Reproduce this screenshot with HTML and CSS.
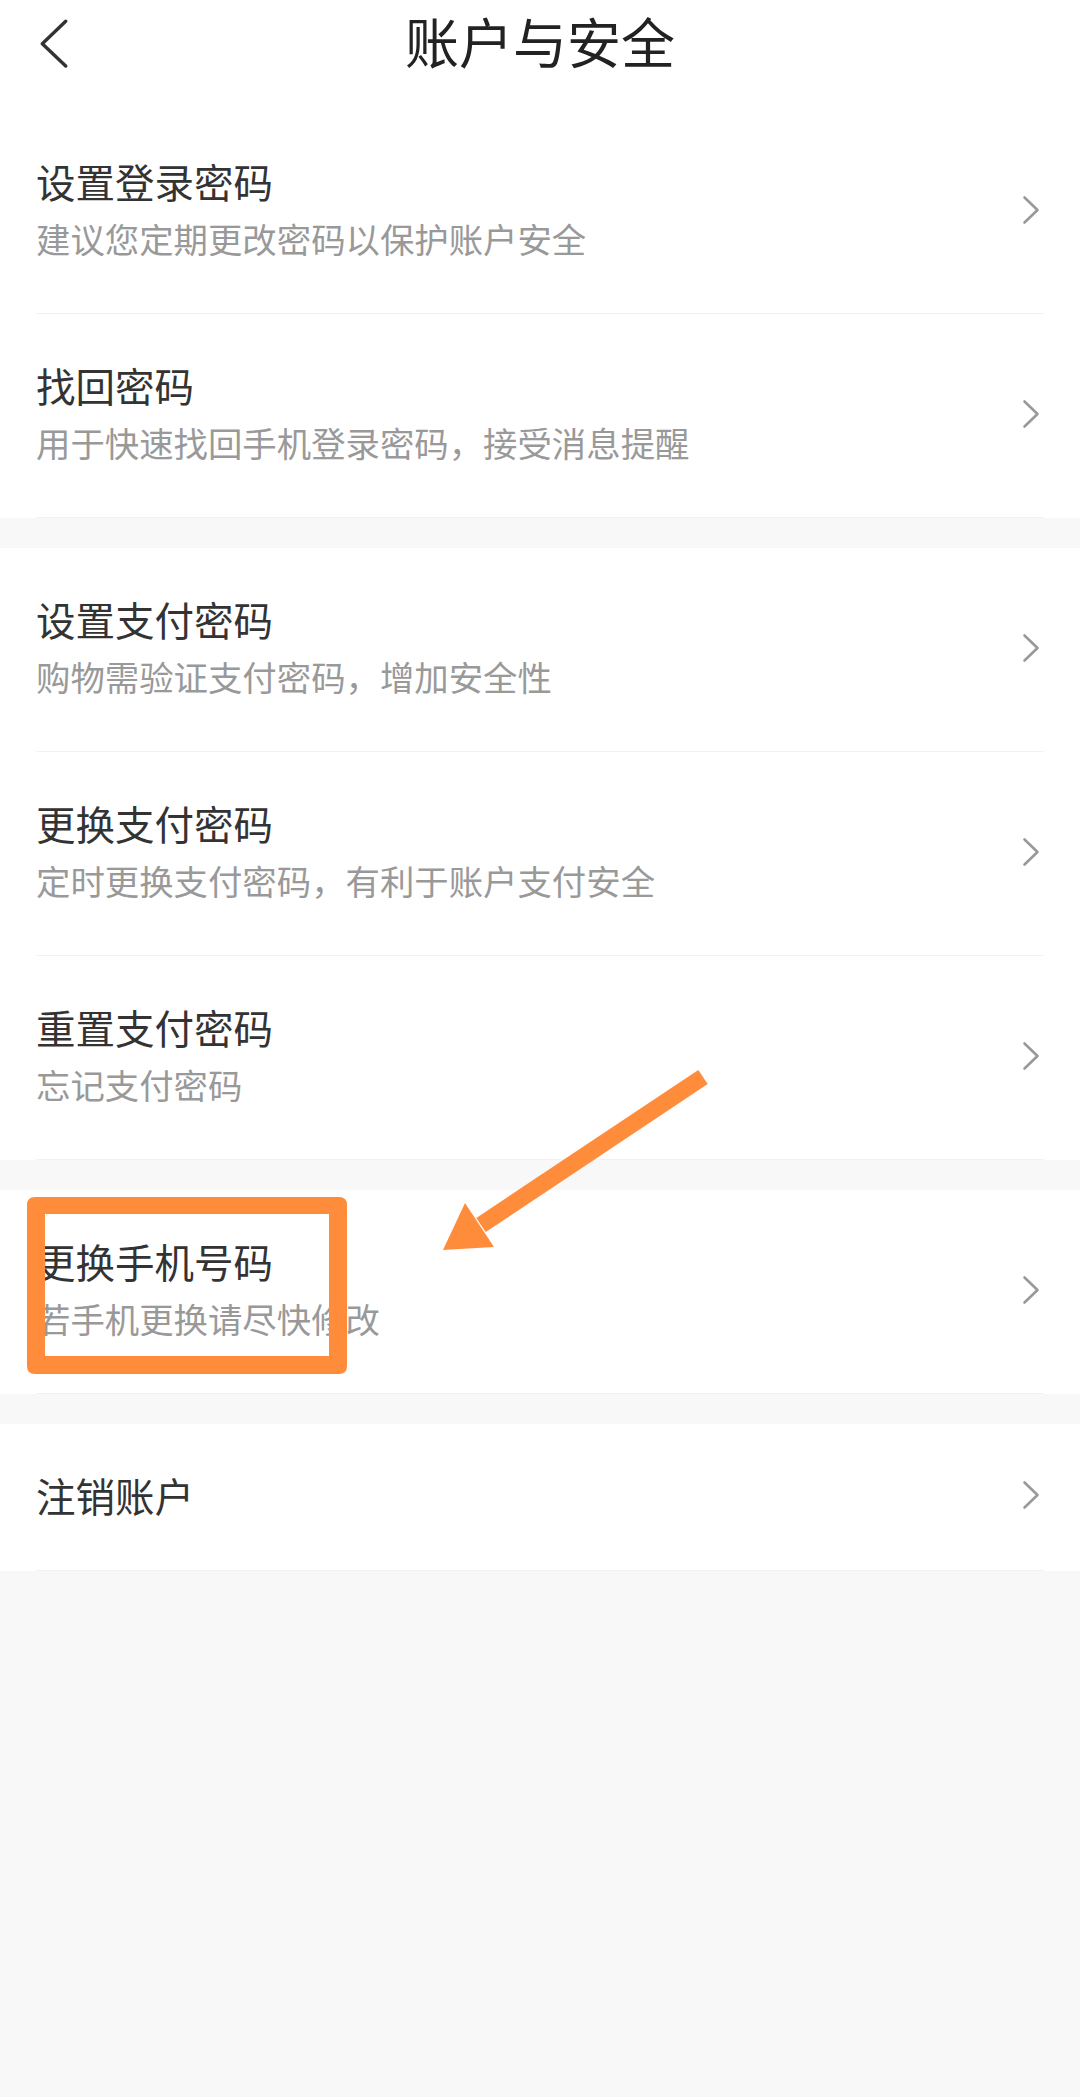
FILE: index.html
```html
<!DOCTYPE html>
<html lang="zh-CN">
<head>
  <meta charset="UTF-8">
  <title>账户与安全</title>
  <link rel="stylesheet" href="styles.css">
</head>
<body>
  <div class="page">
    <header class="topbar">
      <a class="back" href="#">
        <svg width="30" height="50" viewBox="0 0 30 50"><path d="M26.7 2.3 L3.3 24.7 L26.7 47" fill="none" stroke="#333" stroke-width="3.4" stroke-linecap="round" stroke-linejoin="round"/></svg>
      </a>
      <h1>账户与安全</h1>
      <span></span>
    </header>

    <div class="grupo grupo-primero">
      <a class="fila" href="#">
        <div class="textos">
          <div class="titulo">设置登录密码</div>
          <div class="sub">建议您定期更改密码以保护账户安全</div>
        </div>
        <svg class="flecha" width="18" height="30" viewBox="0 0 18 30"><path d="M2.5 2.5 L15.5 15 L2.5 27.5" fill="none" stroke="#999" stroke-width="2.6" stroke-linecap="round" stroke-linejoin="round"/></svg>
      </a>
      <a class="fila" href="#">
        <div class="textos">
          <div class="titulo">找回密码</div>
          <div class="sub">用于快速找回手机登录密码，接受消息提醒</div>
        </div>
        <svg class="flecha" width="18" height="30" viewBox="0 0 18 30"><path d="M2.5 2.5 L15.5 15 L2.5 27.5" fill="none" stroke="#999" stroke-width="2.6" stroke-linecap="round" stroke-linejoin="round"/></svg>
      </a>
    </div>

    <div class="grupo">
      <a class="fila" href="#">
        <div class="textos">
          <div class="titulo">设置支付密码</div>
          <div class="sub">购物需验证支付密码，增加安全性</div>
        </div>
        <svg class="flecha" width="18" height="30" viewBox="0 0 18 30"><path d="M2.5 2.5 L15.5 15 L2.5 27.5" fill="none" stroke="#999" stroke-width="2.6" stroke-linecap="round" stroke-linejoin="round"/></svg>
      </a>
      <a class="fila" href="#">
        <div class="textos">
          <div class="titulo">更换支付密码</div>
          <div class="sub">定时更换支付密码，有利于账户支付安全</div>
        </div>
        <svg class="flecha" width="18" height="30" viewBox="0 0 18 30"><path d="M2.5 2.5 L15.5 15 L2.5 27.5" fill="none" stroke="#999" stroke-width="2.6" stroke-linecap="round" stroke-linejoin="round"/></svg>
      </a>
      <a class="fila" href="#">
        <div class="textos">
          <div class="titulo">重置支付密码</div>
          <div class="sub">忘记支付密码</div>
        </div>
        <svg class="flecha" width="18" height="30" viewBox="0 0 18 30"><path d="M2.5 2.5 L15.5 15 L2.5 27.5" fill="none" stroke="#999" stroke-width="2.6" stroke-linecap="round" stroke-linejoin="round"/></svg>
      </a>
    </div>

    <div class="grupo">
      <a class="fila" href="#">
        <div class="textos">
          <div class="titulo">更换手机号码</div>
          <div class="sub">若手机更换请尽快修改</div>
        </div>
        <svg class="flecha" width="18" height="30" viewBox="0 0 18 30"><path d="M2.5 2.5 L15.5 15 L2.5 27.5" fill="none" stroke="#999" stroke-width="2.6" stroke-linecap="round" stroke-linejoin="round"/></svg>
      </a>
    </div>

    <div class="grupo">
      <a class="fila fila-simple" href="#">
        <div class="textos">
          <div class="titulo">注销账户</div>
        </div>
        <svg class="flecha" width="18" height="30" viewBox="0 0 18 30"><path d="M2.5 2.5 L15.5 15 L2.5 27.5" fill="none" stroke="#999" stroke-width="2.6" stroke-linecap="round" stroke-linejoin="round"/></svg>
      </a>
    </div>

    <!-- marca naranja sobre la captura -->
    <svg class="marca" width="1080" height="2097" viewBox="0 0 1080 2097">
      <path fill="#ff8c3b" fill-rule="evenodd" d="M35 1197 H339 Q347 1197 347 1205 V1366 Q347 1374 339 1374 H35 Q27 1374 27 1366 V1205 Q27 1197 35 1197 Z M45 1214 V1356 H329 V1214 Z"/>
      <polygon fill="#ff8c3b" points="698.3,1069.9 707.7,1084.1 485.7,1232.1 476.3,1217.9"/>
      <polygon fill="#ff8c3b" points="465,1203 443,1250 494,1247"/>
    </svg>
  </div>
</body>
</html>
```

FILE: styles.css
```css
body {
  margin: 0;
  background: #f8f8f8;
  font-family: "Noto Sans CJK SC", "Noto Sans", sans-serif;
}
.page {
  position: relative;
  min-height: 2097px;
}
.topbar {
  display: grid;
  grid-template-columns: 1fr auto 1fr;
  align-items: center;
  height: 86px;
  padding-bottom: 24px;
  background: #fff;
}
.back {
  display: flex;
  padding-left: 39px;
  padding-top: 2px;
}
.topbar h1 {
  margin: 0;
  font-size: 54px;
  font-weight: 400;
  color: #222;
  line-height: 82px;
  padding-bottom: 4px;
}
.grupo {
  background: #fff;
  margin-top: 30px;
}
.grupo-primero {
  margin-top: 0;
}
.fila {
  display: flex;
  align-items: center;
  height: 203px;
  margin: 0 36px;
  border-bottom: 1px solid #f2f2f2;
  text-decoration: none;
}
.fila-simple {
  height: 146px;
}
.textos {
  flex: 1;
  padding-bottom: 8px;
}
.titulo {
  font-size: 39.5px;
  line-height: 50px;
  color: #333;
}
.sub {
  margin-top: 10px;
  font-size: 34.4px;
  line-height: 44px;
  color: #999;
}
.fila-simple .textos {
  padding-bottom: 4px;
}
.flecha {
  margin-right: 4px;
  margin-top: -4px;
}
.marca {
  position: absolute;
  left: 0;
  top: 0;
  pointer-events: none;
}
```
